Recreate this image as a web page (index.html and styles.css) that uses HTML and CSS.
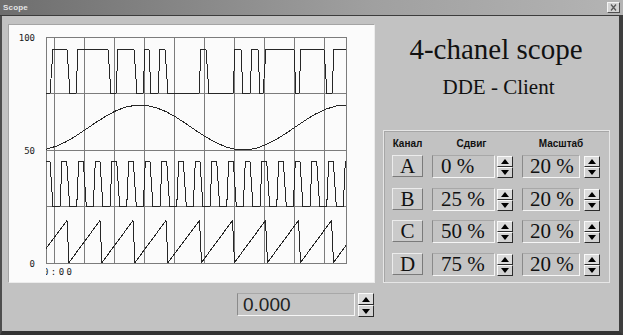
FILE: index.html
```html
<!DOCTYPE html>
<html>
<head>
<meta charset="utf-8">
<link rel="stylesheet" href="styles.css">
</head>
<body>
<div class="window">
  <div class="titlebar">
    <span class="title">Scope</span>
    <span class="close"><svg width="11" height="9" viewBox="0 0 11 9"><path d="M3 1.5 L8 7.5 M8 1.5 L3 7.5" stroke="#5a5a5a" stroke-width="1.3" fill="none"/></svg></span>
  </div>
  <div class="client">
    <div class="top">
      <div class="panel">
        <svg class="plot" width="365" height="257" viewBox="9 25 365 257">
          <defs><clipPath id="tclip"><rect x="46" y="262" width="120" height="16"/></clipPath></defs>
          <g class="grid" shape-rendering="crispEdges">
            <rect x="46.5" y="37.5" width="300" height="226" fill="none"/>
            <path d="M46.5 93.5H346.5 M46.5 150.5H346.5 M46.5 206.5H346.5 M54.5 37.5V263.5 M84.5 37.5V263.5 M114.5 37.5V263.5 M144.5 37.5V263.5 M174.5 37.5V263.5 M204.5 37.5V263.5 M234.5 37.5V263.5 M264.5 37.5V263.5 M294.5 37.5V263.5 M324.5 37.5V263.5"/>
          </g>
          <g class="wave" shape-rendering="crispEdges">
            <polyline points="46,93.5 50,93.5 53,49.5 67,49.5 70,93.5 76,93.5 78,49.5 108,49.5 111,93.5 116,93.5 118,49.5 134,49.5 137,93.5 143,93.5 145,49.5 149,49.5 151,93.5 158,93.5 160,49.5 165,49.5 168,93.5 199,93.5 201,49.5 206,49.5 209,93.5 233,93.5 235,49.5 241,49.5 243,93.5 250,93.5 252,49.5 258,49.5 260,93.5 263,93.5 266,49.5 294,49.5 296,93.5 299,93.5 301,49.5 324,49.5 327,93.5 332,93.5 334,49.5 346,49.5"/>
            <polyline points="46,149.2 56,146.3 66,141.8 76,135.9 86,129.2 96,122.4 106,116.1 116,110.7 126,107.0 136,105.2 146,105.4 156,107.6 166,111.6 176,117.2 186,123.7 196,130.6 206,137.1 216,142.6 226,146.9 236,149.5 246,149.9 256,148.3 266,144.7 276,139.6 286,133.3 296,126.5 306,119.8 316,113.8 326,109.1 336,106.0 346,105.0"/>
            <polyline points="46,161.5 50,161.5 53,206.5 60,206.5 62,161.5 66.7,161.5 69.7,206.5 76.7,206.5 78.7,161.5 83.3,161.5 86.3,206.5 93.3,206.5 95.3,161.5 100,161.5 103,206.5 110,206.5 112,161.5 116.7,161.5 119.7,206.5 126.7,206.5 128.7,161.5 133.3,161.5 136.3,206.5 143.3,206.5 145.3,161.5 150,161.5 153,206.5 160,206.5 162,161.5 166.7,161.5 169.7,206.5 176.7,206.5 178.7,161.5 183.3,161.5 186.3,206.5 193.3,206.5 195.3,161.5 200,161.5 203,206.5 210,206.5 212,161.5 216.7,161.5 219.7,206.5 226.7,206.5 228.7,161.5 233.3,161.5 236.3,206.5 243.3,206.5 245.3,161.5 250,161.5 253,206.5 260,206.5 262,161.5 266.7,161.5 269.7,206.5 276.7,206.5 278.7,161.5 283.3,161.5 286.3,206.5 293.3,206.5 295.3,161.5 300,161.5 303,206.5 310,206.5 312,161.5 316.7,161.5 319.7,206.5 326.7,206.5 328.7,161.5 333.3,161.5 336.3,206.5 343.3,206.5 345.3,161.5 346,161.5"/>
            <polyline points="46,248.5 67,220.5 69,262.5 100,220.5 102,262.5 133,220.5 135,262.5 166,220.5 168,262.5 199.5,220.5 201.5,262.5 232.5,220.5 234.5,262.5 265.5,220.5 267.5,262.5 298.5,220.5 300.5,262.5 331.5,220.5 333.5,262.5 346,245.5"/>
          </g>
          <g class="labels">
            <text x="35" y="41" text-anchor="end">100</text>
            <text x="35" y="154" text-anchor="end">50</text>
            <text x="35" y="267" text-anchor="end">0</text>
            <text class="time" x="43" y="275" clip-path="url(#tclip)">0:00</text>
          </g>
        </svg>
      </div>
      <div class="side">
        <div class="heading">4-chanel scope</div>
        <div class="sub">DDE - Client</div>
        <div class="group">
          <div class="ghead"><span>Канал</span><span>Сдвиг</span><span>Масштаб</span></div>
          <div class="rows">
            <div class="btn">A</div>
            <div class="cell c2"><div class="field">0 %</div><div class="spin"><span class="up"></span><span class="down"></span></div></div>
            <div class="cell c3"><div class="field">20 %</div><div class="spin"><span class="up"></span><span class="down"></span></div></div>

            <div class="btn">B</div>
            <div class="cell c2"><div class="field">25 %</div><div class="spin"><span class="up"></span><span class="down"></span></div></div>
            <div class="cell c3"><div class="field">20 %</div><div class="spin"><span class="up"></span><span class="down"></span></div></div>

            <div class="btn">C</div>
            <div class="cell c2"><div class="field">50 %</div><div class="spin"><span class="up"></span><span class="down"></span></div></div>
            <div class="cell c3"><div class="field">20 %</div><div class="spin"><span class="up"></span><span class="down"></span></div></div>

            <div class="btn">D</div>
            <div class="cell c2"><div class="field">75 %</div><div class="spin"><span class="up"></span><span class="down"></span></div></div>
            <div class="cell c3"><div class="field">20 %</div><div class="spin"><span class="up"></span><span class="down"></span></div></div>
          </div>
        </div>
      </div>
    </div>
    <div class="bottom">
      <div class="field num">0.000</div>
      <div class="spin"><span class="up"></span><span class="down"></span></div>
    </div>
  </div>
</div>
</body>
</html>
```

FILE: styles.css
```css
html, body {
  margin: 0;
  padding: 0;
  background: #c0c0c0;
}

.window {
  width: 623px;
  height: 335px;
  background: #c2c2c2;
  overflow: hidden;
}

.titlebar {
  height: 15px;
  border-bottom: 1px solid #3c3c3c;
  background: linear-gradient(to right, #6e6e6e, #a0a0a0 60%, #b4b4b4);
  display: flex;
  align-items: center;
  justify-content: space-between;
  padding: 0 3px 0 3px;
}

.title {
  font-family: "Liberation Sans", Arial, sans-serif;
  font-weight: bold;
  font-size: 8px;
  color: #e4e4e4;
  letter-spacing: 0.2px;
}

.close {
  width: 13px;
  height: 11px;
  box-sizing: border-box;
  background: #d4d4d4;
  border: 1px solid;
  border-color: #f4f4f4 #505050 #505050 #f4f4f4;
  display: flex;
  align-items: center;
  justify-content: center;
}

.client {
  height: 319px;
  box-sizing: border-box;
  border-left: 2px solid #4e4e4e;
  border-right: 4px solid #3e3e3e;
  border-bottom: 4px solid #343434;
  padding: 8px 0 0 6px;
}

.top {
  display: flex;
  height: 259px;
}

.panel {
  width: 367px;
  height: 259px;
  box-sizing: border-box;
  border: 1px solid;
  border-color: #a4a4a4 #ececec #ececec #a4a4a4;
  background: #fbfbfb;
  flex: none;
}

.plot {
  display: block;
}

.grid rect, .grid path {
  stroke: #7c7c7c;
  stroke-width: 1;
  fill: none;
}

.wave polyline {
  fill: none;
  stroke: #262626;
  stroke-width: 1;
}

.labels text {
  font-family: "DejaVu Sans Mono", monospace;
  font-size: 9px;
  fill: #1a1a1a;
}

.labels .time {
  letter-spacing: 2.4px;
}

.side {
  width: 244px;
  display: flex;
  flex-direction: column;
  align-items: center;
  color: #111;
}

.heading {
  font-family: "Liberation Serif", "Times New Roman", serif;
  font-size: 29px;
  line-height: 34px;
  margin-top: 8px;
  margin-left: -2px;
}

.sub {
  font-family: "Liberation Serif", "Times New Roman", serif;
  font-size: 21px;
  line-height: 24px;
  margin-top: 9px;
  margin-left: 3px;
}

.group {
  align-self: flex-start;
  margin: 31px 0 0 8px;
  width: 227px;
  height: 153px;
  box-sizing: border-box;
  border: 1px solid #e6e6e6;
  box-shadow: inset 1px 1px 0 #a6a6a6;
  padding: 6px 0 0 8px;
}

.ghead, .rows {
  display: grid;
  grid-template-columns: 31px 81px 78px;
  column-gap: 9px;
}

.ghead {
  height: 14px;
  margin-bottom: 4px;
  font-family: "Liberation Sans", Arial, sans-serif;
  font-weight: bold;
  font-size: 10px;
  line-height: 14px;
  text-align: center;
  color: #111;
}

.ghead span:nth-child(2) { margin-left: -2px; }

.rows {
  grid-auto-rows: 23px;
  row-gap: 9.5px;
}

.btn {
  height: 22px;
  box-sizing: border-box;
  background: #cacaca;
  border: 1px solid;
  border-color: #ececec #7a7a7a #7a7a7a #ececec;
  font-family: "Liberation Serif", "Times New Roman", serif;
  font-size: 21px;
  line-height: 20px;
  text-align: center;
  color: #111;
}

.cell {
  display: flex;
  align-items: flex-start;
}

.c2 { gap: 2px; }
.c3 { gap: 4px; }

.field {
  height: 23px;
  box-sizing: border-box;
  border: 1px solid;
  border-color: #a8a8a8 #f6f6f6 #f6f6f6 #8a8a8a;
  background: #c4c4c4;
  font-family: "Liberation Serif", "Times New Roman", serif;
  font-size: 21px;
  line-height: 21px;
  color: #111;
  padding-left: 8px;
  white-space: nowrap;
}

.c2 .field { width: 63px; }
.c3 .field { width: 58px; padding-left: 7px; }

.spin {
  width: 16px;
  height: 22px;
  margin-top: 1px;
  display: flex;
  flex-direction: column;
  flex: none;
}

.spin span {
  height: 11px;
  box-sizing: border-box;
  border: 1px solid;
  border-color: #fafafa #2c2c2c #2c2c2c #fafafa;
  background: #d2d2d2;
  display: flex;
  align-items: center;
  justify-content: center;
}

.spin .up { background: #dcdcdc; }

.spin .up::after {
  content: "";
  width: 0;
  height: 0;
  border-left: 4px solid transparent;
  border-right: 4px solid transparent;
  border-bottom: 5px solid #000;
}

.spin .down::after {
  content: "";
  width: 0;
  height: 0;
  border-left: 4px solid transparent;
  border-right: 4px solid transparent;
  border-top: 5px solid #000;
}

.bottom {
  display: flex;
  align-items: flex-start;
  gap: 3px;
  margin: 10px 0 0 229px;
}

.field.num {
  width: 118px;
  font-family: "Liberation Sans", Arial, sans-serif;
  font-size: 19px;
  line-height: 21px;
  padding-left: 5px;
  color: #222;
}

.bottom .spin {
  height: 24px;
  margin-top: 0;
}

.bottom .spin span {
  height: 12px;
}
```
